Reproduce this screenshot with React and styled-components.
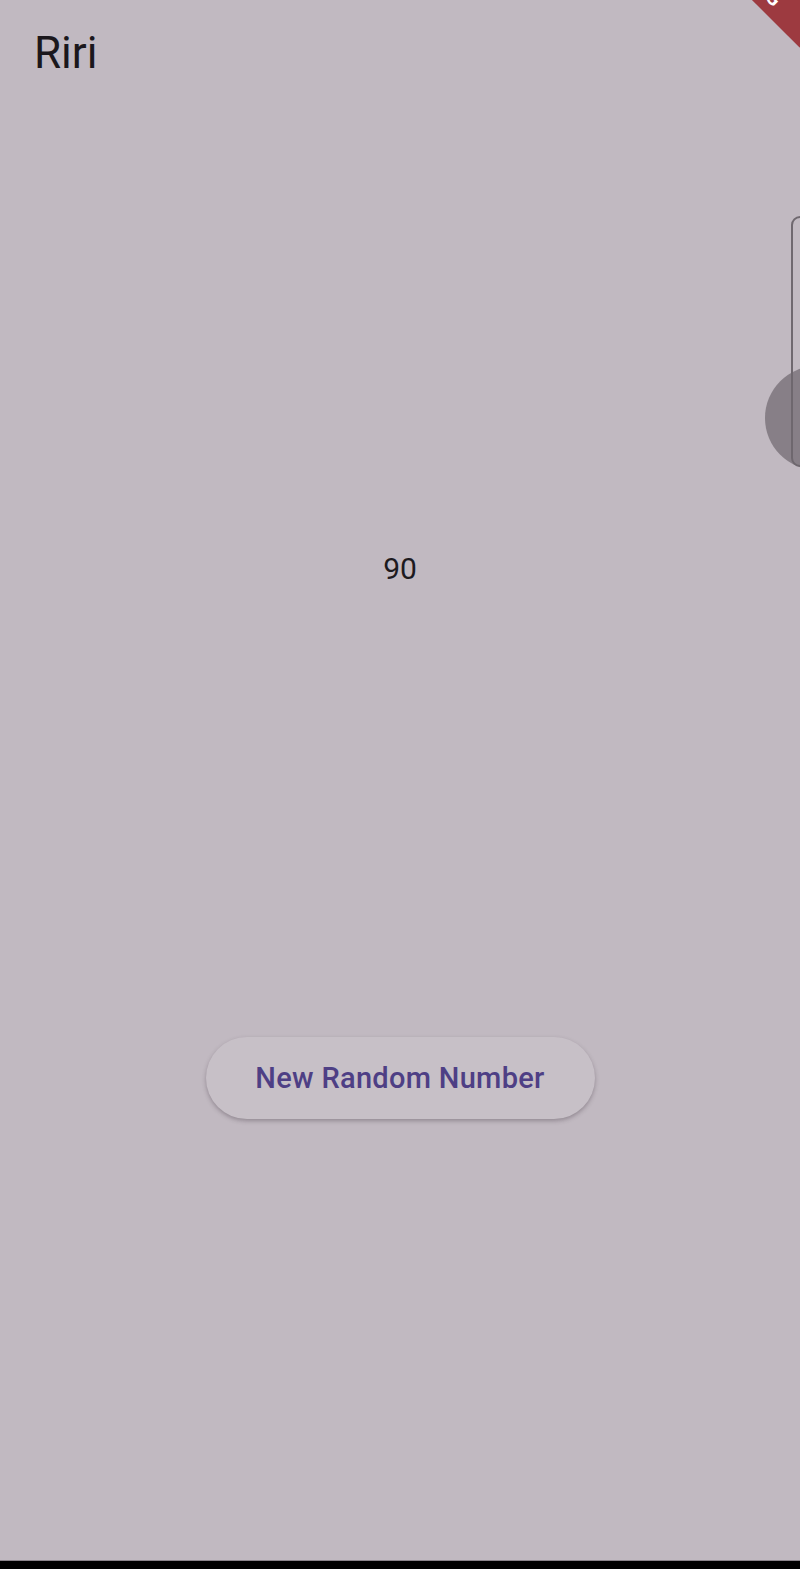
import styled, { createGlobalStyle } from 'styled-components';

const GlobalStyle = createGlobalStyle`
    html, body {
        margin: 0;
        padding: 0;
        background: #000;
    }
    body {
        font-family: Roboto, 'Noto Sans', sans-serif;
    }
`;

const Screen = styled.div`
    position: relative;
    display: flex;
    flex-direction: column;
    width: 800px;
    height: 1569px;
    overflow: hidden;
    background: #c1b9c1;
`;

const AppBar = styled.header`
    display: flex;
    align-items: center;
    height: 105px;
    padding-left: 34px;
`;

const Title = styled.h1`
    margin: 0;
    font-size: 44px;
    font-weight: 400;
    color: #1b171c;
`;

const Body = styled.main`
    flex: 1;
    display: flex;
    flex-direction: column;
    align-items: center;
    justify-content: center;
    gap: 450px;
    padding-top: 4px;
`;

const Count = styled.div`
    font-size: 30px;
    line-height: 36px;
    color: #1d1a1f;
`;

const PillButton = styled.button`
    width: 389px;
    height: 82px;
    border: none;
    border-radius: 41px;
    background: #c7c0c7;
    box-shadow: 0 2px 4px rgba(60, 50, 60, 0.35);
    color: #4e3f85;
    font-family: Roboto, sans-serif;
    font-size: 29px;
    font-weight: 500;
    letter-spacing: 0.3px;
    cursor: pointer;
`;

const NavBar = styled.div`
    height: 8px;
    background: #000;
    border-top: 1px solid #8a838a;
`;

const ScrollTrack = styled.div`
    position: absolute;
    top: 216px;
    left: 791px;
    width: 20px;
    height: 251px;
    border: 2px solid #6f686f;
    border-radius: 9px;
    box-sizing: border-box;
`;

const ScrollThumb = styled.div`
    position: absolute;
    top: 366px;
    left: 765px;
    width: 104px;
    height: 104px;
    border-radius: 50%;
    background: rgba(110, 102, 110, 0.7);
`;

const DebugBanner = styled.div`
    position: absolute;
    top: -38px;
    left: 675px;
    width: 160px;
    height: 34px;
    transform: rotate(45deg);
    background: #9d3a40;
    color: #fff;
    font-size: 20px;
    font-weight: 700;
    line-height: 34px;
    text-align: center;
    letter-spacing: 1px;
`;

export default function App() {
    return (
        <>
            <GlobalStyle />
            <Screen>
                <AppBar>
                    <Title>Riri</Title>
                </AppBar>
                <Body>
                    <Count>90</Count>
                    <PillButton>New Random Number</PillButton>
                </Body>
                <NavBar />
                <ScrollTrack />
                <ScrollThumb />
                <DebugBanner>DEBUG</DebugBanner>
            </Screen>
        </>
    );
}
